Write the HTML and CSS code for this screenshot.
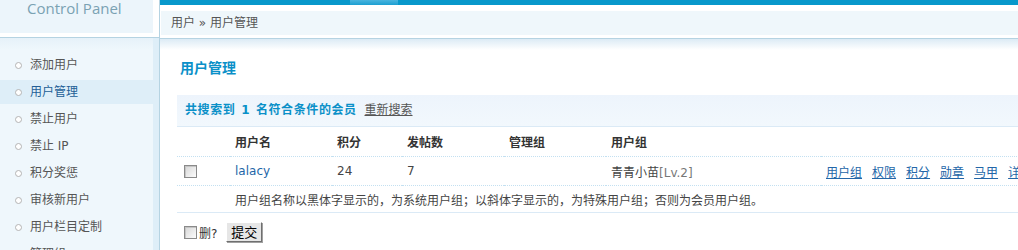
FILE: index.html
```html
<!DOCTYPE html>
<html lang="zh-CN">
<head>
    <meta charset="UTF-8">
    <title>Control Panel - 用户管理</title>
    <link rel="stylesheet" href="styles.css">
</head>
<body>
    <div class="page">
        <div class="side">
            <div class="logo">Control Panel</div>
            <ul class="menu">
                <li>添加用户</li>
                <li class="on">用户管理</li>
                <li>禁止用户</li>
                <li>禁止 IP</li>
                <li>积分奖惩</li>
                <li>审核新用户</li>
                <li>用户栏目定制</li>
                <li>管理组</li>
            </ul>
        </div>

        <div class="main">
            <div class="topbar"><span class="tab"></span></div>
            <div class="crumb">用户 &raquo; 用户管理</div>

            <div class="content">
                <h3 class="title">用户管理</h3>

                <div class="search">
                    共搜索到 <span class="num">1</span> 名符合条件的会员
                    <a href="#" class="again">重新搜索</a>
                </div>

                <table class="list">
                    <colgroup>
                        <col class="c-check">
                        <col class="c-name">
                        <col class="c-credit">
                        <col class="c-posts">
                        <col class="c-admin">
                        <col class="c-group">
                        <col class="c-ops">
                    </colgroup>
                    <thead>
                        <tr>
                            <th></th>
                            <th>用户名</th>
                            <th>积分</th>
                            <th>发帖数</th>
                            <th>管理组</th>
                            <th>用户组</th>
                            <th></th>
                        </tr>
                    </thead>
                    <tbody>
                        <tr class="row">
                            <td><input type="checkbox" class="chk"></td>
                            <td><a href="#" class="user">lalacy</a></td>
                            <td>24</td>
                            <td>7</td>
                            <td></td>
                            <td>青青小苗<span class="lv">[Lv.2]</span></td>
                            <td class="ops">
                                <a href="#">用户组</a><a href="#">权限</a><a href="#">积分</a><a href="#">勋章</a><a href="#">马甲</a><a href="#">详情</a>
                            </td>
                        </tr>
                        <tr class="note">
                            <td></td>
                            <td colspan="6">用户组名称以黑体字显示的，为系统用户组；以斜体字显示的，为特殊用户组；否则为会员用户组。</td>
                        </tr>
                    </tbody>
                </table>

                <div class="submit">
                    <input type="checkbox" class="chk">
                    <span class="del">删?</span>
                    <button type="button" class="btn">提交</button>
                </div>
            </div>
        </div>
    </div>
</body>
</html>
```

FILE: styles.css
```css
html, body {
    margin: 0;
    overflow: hidden;
}
body {
    font-family: "DejaVu Sans", "Noto Sans CJK SC", sans-serif;
    font-size: 12px;
    color: #444;
    background: #fff;
}
a {
    color: #2366a8;
}

.page {
    display: flex;
    min-height: 100vh;
}

/* sidebar */
.side {
    width: 159px;
    flex-shrink: 0;
    display: flex;
    flex-direction: column;
    border-right: 1px solid #b5d3e2;
    background: #fff;
}
.logo {
    height: 34px;
    margin-right: 6px;
    padding-left: 27px;
    border-bottom: 4px solid #fff;
    background: #ecf5fb;
    font-family: "Open Sans", sans-serif;
    font-size: 15px;
    line-height: 18px;
    margin-top: -1px;
    color: #7aa2b3;
}
.menu {
    flex: 1;
    list-style: none;
    margin: 0;
    padding: 15px 0 0;
    border-top: 1px solid #b5d3e2;
    background: linear-gradient(#e6f1f9, #eff7fc 12px);
    box-shadow: inset -6px 0 0 #deeef8;
}
.menu li {
    display: flex;
    align-items: center;
    height: 24px;
    margin: 0 6px 3px 0;
    padding-left: 15px;
    color: #555;
    line-height: 24px;
}
.menu li::before {
    content: "";
    width: 5px;
    height: 5px;
    margin-right: 8px;
    border: 1px solid #b4b4b4;
    border-radius: 50%;
    background: #fff;
}
.menu li.on {
    background: #deeef8;
    color: #225e96;
}

/* main */
.main {
    flex: 1;
    min-width: 0;
}
.topbar {
    height: 5px;
    background: #0898cb;
}
.tab {
    display: block;
    width: 48px;
    height: 5px;
    margin-left: 190px;
    background: linear-gradient(#4ab4de, #1c9fd1);
}
.crumb {
    height: 24px;
    margin: 6px 0 3px 1px;
    padding-left: 10px;
    background: #eff7fb;
    line-height: 24px;
    color: #555;
}
.content {
    border-top: 1px solid #b5d3e2;
    padding: 19px 0 0 17px;
    background: linear-gradient(#dcebf5, #fff 11px);
    width: 1000px;
}
.title {
    margin: 0 0 17px 3px;
    font-size: 14px;
    line-height: 20px;
    color: #0a90c8;
}
.search {
    height: 31px;
    padding-left: 8px;
    border-bottom: 1px solid #dbeaf6;
    background: linear-gradient(#edf4fc, #f2f8fd);
    line-height: 31px;
    font-weight: bold;
    letter-spacing: 0.6px;
    color: #0a90c8;
}
.search .num {
    padding: 0 1px;
}
.search .again {
    margin-left: 3px;
    font-weight: normal;
    letter-spacing: 0;
    color: #555;
}

/* table */
.list {
    width: 1000px;
    table-layout: fixed;
    border-collapse: collapse;
}
.c-check { width: 53px; }
.c-name { width: 102px; }
.c-credit { width: 70px; }
.c-posts { width: 102px; }
.c-admin { width: 102px; }
.c-group { width: 215px; }
.c-ops { width: 356px; }
.list th, .list td {
    padding: 0 5px;
    text-align: left;
    white-space: nowrap;
}
.list th {
    height: 29px;
    border-bottom: 1px dotted #c3e0f1;
    color: #333;
}
.list .row td {
    height: 28px;
    border-bottom: 1px dotted #c3e0f1;
}
.list .note td {
    height: 26px;
    border-bottom: 1px solid #dbeaf6;
}
.user {
    text-decoration: none;
}
.lv {
    color: #777;
}
.ops a {
    margin-right: 10px;
}

.chk {
    appearance: none;
    width: 13px;
    height: 13px;
    margin: 0 0 0 2px;
    border: 1px solid #8a8a8a;
    box-shadow: inset 1px 1px 0 #c4c4c4;
    background: linear-gradient(135deg, #d6d6d6, #fcfcfc);
    vertical-align: middle;
}

.submit {
    display: flex;
    align-items: center;
    height: 20px;
    margin-top: 9px;
    padding-left: 5px;
}
.del {
    margin: 0 9px 0 2px;
    color: #333;
}
.btn {
    width: 36px;
    height: 20px;
    padding: 0;
    border: 1px solid;
    border-color: #fff #6f6f6f #6f6f6f #fff;
    box-shadow: 1px 1px 0 #a0a0a0;
    background: #e6e6e6;
    font-family: "Noto Sans CJK SC", sans-serif;
    font-size: 13px;
    line-height: 18px;
    color: #000;
}
```
